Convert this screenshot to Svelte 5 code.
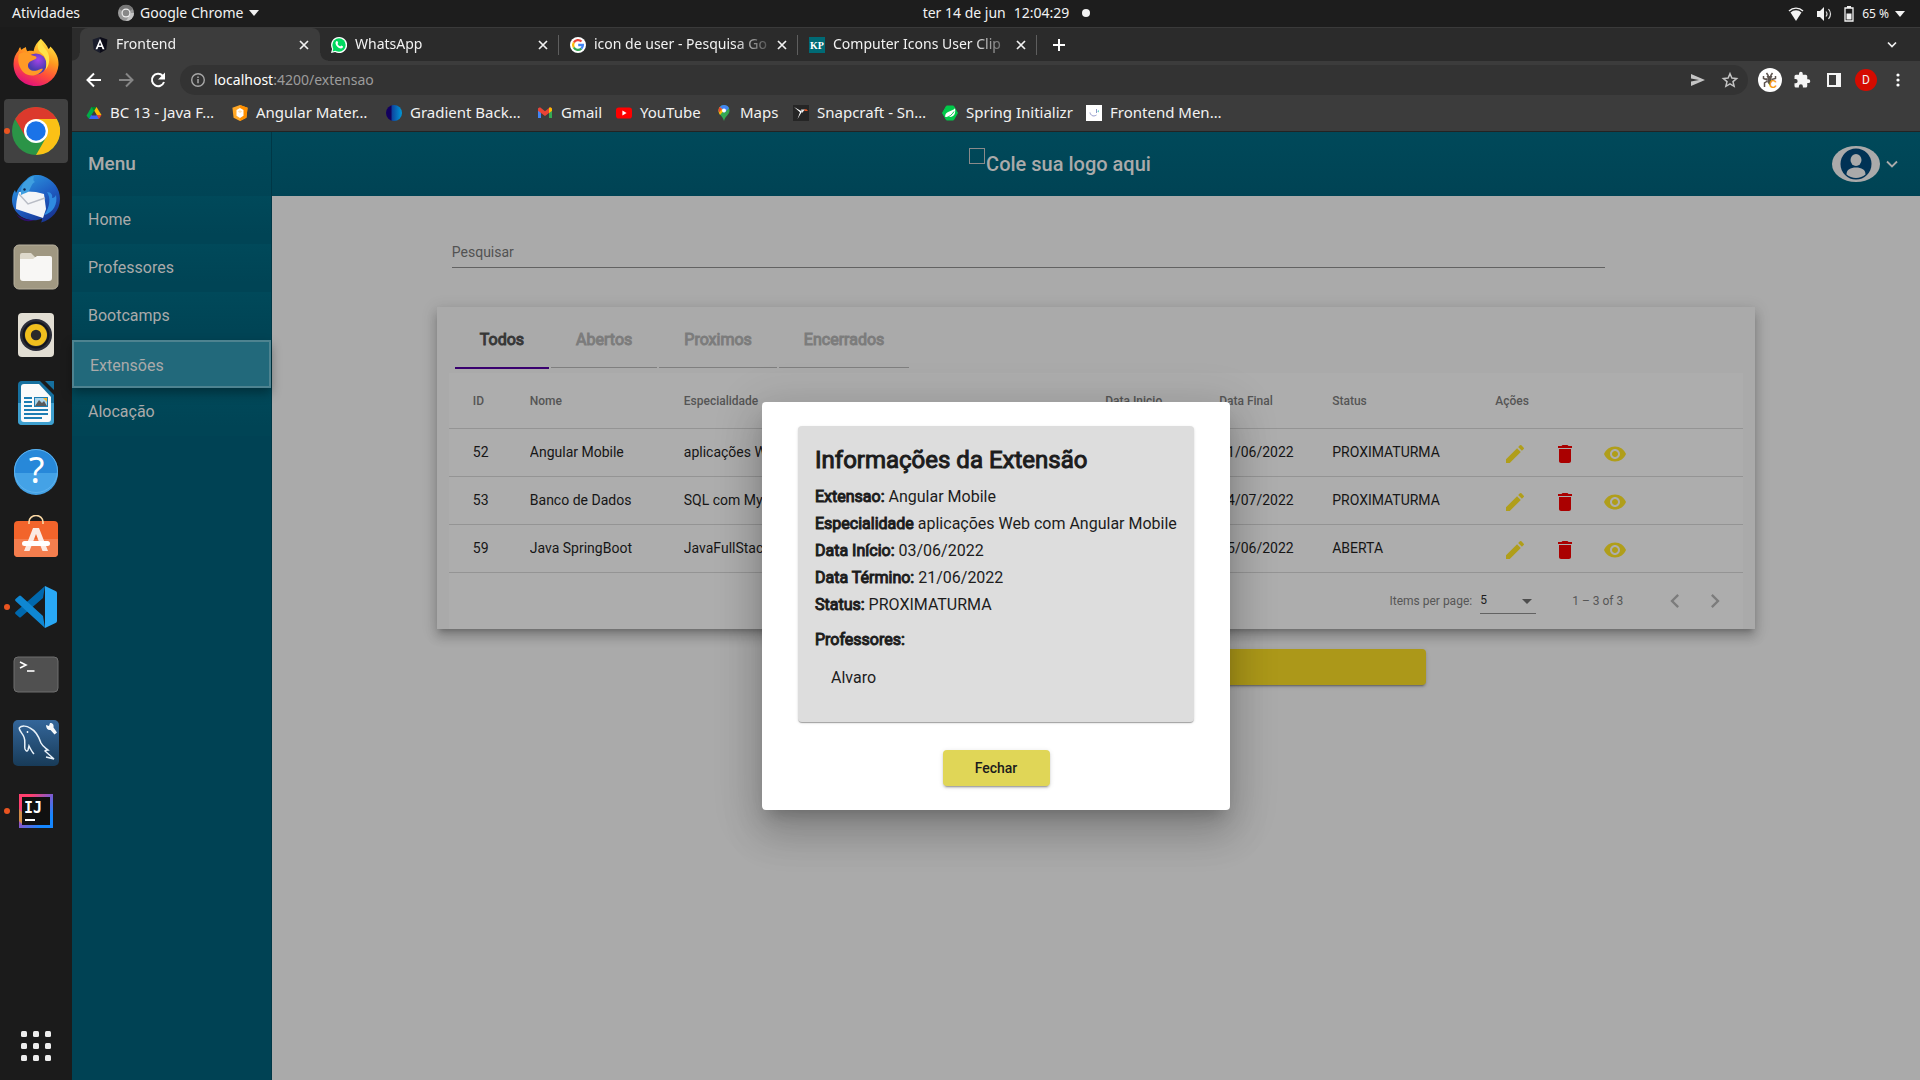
<script>
  const tabs = [
    { title: 'Frontend', icon: 'angular', active: true },
    { title: 'WhatsApp', icon: 'whatsapp' },
    { title: 'icon de user - Pesquisa Go', icon: 'google' },
    { title: 'Computer Icons User Clip', icon: 'kp' },
  ];
  const bookmarks = [
    { title: 'BC 13 - Java F…', icon: 'drive' },
    { title: 'Angular Mater…', icon: 'material' },
    { title: 'Gradient Back…', icon: 'gradient' },
    { title: 'Gmail', icon: 'gmail' },
    { title: 'YouTube', icon: 'youtube' },
    { title: 'Maps', icon: 'maps' },
    { title: 'Snapcraft - Sn…', icon: 'snap' },
    { title: 'Spring Initializr', icon: 'spring' },
    { title: 'Frontend Men…', icon: 'mentor' },
  ];
  const dock = [
    { name: 'Firefox', icon: 'firefox' },
    { name: 'Google Chrome', icon: 'chrome', running: true, focused: true },
    { name: 'Thunderbird', icon: 'thunderbird' },
    { name: 'Arquivos', icon: 'files' },
    { name: 'Rhythmbox', icon: 'rhythmbox' },
    { name: 'LibreOffice Writer', icon: 'writer' },
    { name: 'Ajuda', icon: 'help' },
    { name: 'Ubuntu Software', icon: 'software' },
    { name: 'Visual Studio Code', icon: 'vscode', running: true },
    { name: 'Terminal', icon: 'terminal' },
    { name: 'MySQL Workbench', icon: 'workbench' },
    { name: 'IntelliJ IDEA', icon: 'idea', running: true },
  ];
  const menu = ['Home', 'Professores', 'Bootcamps', 'Extensões', 'Alocação'];
  const filters = ['Todos', 'Abertos', 'Proximos', 'Encerrados'];
  const rows = [
    { id: 52, nome: 'Angular Mobile', esp: 'aplicações Web com Angular Mobile', ini: '03/06/2022', fim: '21/06/2022', status: 'PROXIMATURMA' },
    { id: 53, nome: 'Banco de Dados', esp: 'SQL com MySQL', ini: '14/06/2022', fim: '14/07/2022', status: 'PROXIMATURMA' },
    { id: 59, nome: 'Java SpringBoot', esp: 'JavaFullStack', ini: '01/06/2022', fim: '15/06/2022', status: 'ABERTA' },
  ];
  const details = [
    ['Extensao:', 'Angular Mobile'],
    ['Especialidade', 'aplicações Web com Angular Mobile'],
    ['Data Início:', '03/06/2022'],
    ['Data Término:', '21/06/2022'],
    ['Status:', 'PROXIMATURMA'],
  ];
  let activeMenu = $state('Extensões');
  let activeFilter = $state('Todos');
  let open = $state(true);
</script>

{#snippet favicon(name)}
  <svg class="fav" viewBox="0 0 16 16" aria-hidden="true">
    {#if name === 'angular'}
      <path d="M8 0l7.400 2.600-1.100 9.900L8 16z" fill="#0c0c18" /><path d="M8 0L.6 2.600l1.100 9.900L8 16z" fill="#1a1d2c" />
      <path d="M8 1.800L3.500 12.200h1.900l.9-2.200h3.400l.9 2.200h1.900zM8 5.400l1.200 3.100H6.800z" fill="#fff" fill-rule="evenodd" />
    {:else if name === 'whatsapp'}
      <path d="M8 0a8 8 0 0 0-6.900 12L0 16l4.100-1.100A8 8 0 1 0 8 0z" fill="#fff" />
      <circle cx="8" cy="8" r="6.700" fill="#00d95f" /><path d="M1.600 14.400l1-3.600 2.600 2.700z" fill="#00d95f" />
      <path d="M5.600 4.100c.5-.3.8 0 1 .5l.5 1.200c.1.400-.5.900-.6 1.100.6 1.200 1.500 2 2.700 2.500.3 0 .8-1 1.100-.9l1.500.8c.4.300.1 1.300-.4 1.700-1 .8-2.500.5-4.200-.6C5.700 9.300 4.600 7.700 4.500 6.300c0-.9.400-1.800 1.100-2.200z" fill="#fff" />
    {:else if name === 'google'}
      <circle cx="8" cy="8" r="8" fill="#fff" />
      <g fill="none" stroke-width="2.300">
        <path d="M11.500 4.500A4.900 4.900 0 0 0 3.800 5.500" stroke="#ea4335" />
        <path d="M3.800 5.500a4.900 4.900 0 0 0 0 5" stroke="#fbbc05" />
        <path d="M3.800 10.500a4.900 4.900 0 0 0 7.500 1.100" stroke="#34a853" />
        <path d="M11.300 11.600A4.900 4.900 0 0 0 12.900 8H8.200" stroke="#4285f4" />
      </g>
    {:else if name === 'kp'}
      <rect width="16" height="16" fill="#006a75" /><text x="8" y="11.500" text-anchor="middle" font-family="Liberation Serif, serif" font-weight="700" font-size="10" fill="#fff">KP</text>
    {:else if name === 'drive'}
      <path d="M5.500 2H8l1.300 2.300L3 14 .5 10.500z" fill="#00ac47" /><path d="M6 2h4.500L15.500 10h-4.700z" fill="#ffba00" /><path d="M5.500 2h5L8 6.200z" fill="#00832d" /><path d="M5.200 10h6L13 14H3z" fill="#3b63f5" /><path d="M10.800 10h4.700L13 14z" fill="#ea4335" /><path d="M8 6.200l2.600 4.300H5.400z" fill="#3c3c3c" />
    {:else if name === 'material'}
      <path d="M8 0l7.600 2.700-1.200 10L8 16l-6.400-3.300-1.200-10z" fill="#ffa726" /><path d="M8 0l7.600 2.700-1.200 10L8 16z" fill="#ff8f00" /><path d="M8 3l3.500 2v5.800L8 13l-3.500-2.200V5z" fill="#fff" /><path d="M8 5.200l2.300 1.400L8 8 5.700 6.600z" fill="#ffe0b2" />
    {:else if name === 'gradient'}
      <defs><linearGradient id="gb"><stop offset=".3" stop-color="#12005e" /><stop offset=".4" stop-color="#0d47a1" /><stop offset="1" stop-color="#0098d8" /></linearGradient></defs>
      <circle cx="8" cy="8" r="8" fill="url(#gb)" />
    {:else if name === 'gmail'}
      <path d="M1 3.500h3V13H1z" fill="#4285f4" /><path d="M12 3.500h3V13h-3z" fill="#34a853" /><path d="M1 4.500C1 2.600 3 2.200 4 3l4 3.200L12 3c1-.8 3-.4 3 1.500v1.200L8 11 1 5.700z" fill="#ea4335" /><path d="M12 3c1-.8 3-.4 3 1.500v1.200L12 8z" fill="#fbbc04" />
    {:else if name === 'youtube'}
      <rect y="2.500" width="16" height="11" rx="2.800" fill="#f00" /><path d="M6.400 5.600v4.800L10.600 8z" fill="#fff" />
    {:else if name === 'maps'}
      <path d="M8 0a5.500 5.500 0 0 0-5.500 5.500C2.500 9.500 6.800 11 8 16c1.200-5 5.500-6.500 5.500-10.500A5.500 5.500 0 0 0 8 0z" fill="#34a853" /><path d="M8 0a5.500 5.500 0 0 1 5 3.300L8 8 3.600 2.200A5.500 5.500 0 0 1 8 0z" fill="#4285f4" /><path d="M3.700 2L8 5.400 4 9.900C2.300 7.600 2 4.500 3.700 2z" fill="#fbbc04" /><path d="M3.700 2L6 4 3 7.500C2.200 5.500 2.500 3.500 3.700 2z" fill="#ea4335" /><circle cx="8" cy="5.500" r="2" fill="#fff" />
    {:else if name === 'snap'}
      <rect width="16" height="16" fill="#252525" /><path d="M1 2l8 4.500L4.500 14 7 7.200z" fill="#fff" /><path d="M8 4.500h4L9 8z" fill="#e8e8e8" /><path d="M11.500 4.200h2L15 6h-3.500z" fill="#e95420" />
    {:else if name === 'spring'}
      <path d="M4.500 1h7L15.500 8l-4 7h-7L.5 8z" fill="#00c94a" stroke="#00c94a" stroke-linejoin="round" /><path d="M13 3.200c.6 3 .6 8.800-5.500 8.800H3.200C2.600 5.500 10 7 13 3.200z" fill="#fff" /><path d="M3.500 12.800C7 12 10 10 12 6.500" stroke="#00c94a" fill="none" />
    {:else}
      <rect width="16" height="16" fill="#fff" /><path d="M4 7.500c.5 3 3.500 4.500 6.500 2.500M10.500 4v4" stroke="#8f96c8" fill="none" /><path d="M12.800 5l-1.500 1.300 1.500 1.300z" fill="#54c6c0" />
    {/if}
  </svg>
{/snippet}

{#snippet app(name)}
  <svg width="48" height="48" viewBox="0 0 48 48" aria-hidden="true">
    {#if name === 'firefox'}
      <defs>
        <linearGradient id="fx" x1=".8" y1="0" x2=".35" y2="1"><stop offset="0" stop-color="#fff24a" /><stop offset=".4" stop-color="#ff9a1f" /><stop offset=".7" stop-color="#ff4a3c" /><stop offset="1" stop-color="#e0107c" /></linearGradient>
        <radialGradient id="fxp" cx=".6" cy=".3"><stop offset="0" stop-color="#a443e8" /><stop offset="1" stop-color="#4b3bb0" /></radialGradient>
      </defs>
      <path d="M29 0c3 3 6 6 7.500 10 1-.8 1.500-1.500 1.800-2.600C44 13 47 19 46.500 26A22.600 22.600 0 0 1 24 47C11 47 1.500 37.500 1.500 25c0-6 2-10 5-13.500.2-1.300.7-2.700 1.800-3.500.3 1.500.7 2.300 1.200 2.800C10.800 9.800 12 8.800 14 8c0 2 .6 3.200 1.500 4.200 2.500-.6 4.500-.5 6 0C22.500 7 25 3 29 0z" fill="url(#fx)" />
      <circle cx="24" cy="25" r="10.500" fill="url(#fxp)" />
      <path d="M7 15c5-3 10-2 12 1l5 1.500c1 .8.600 2-1 2.800-3 1.300-6 2-7 5.500-.5 4 3 6 6 6 4.500 0 6-2.500 9-2-3 7-13 9-19 4C7 29 5 22 7 15z" fill="#ff9a26" />
      <path d="M29 0c0 7 5 9 7 14 2.500 6 1 13-2.500 17 2-7 .5-14-5.500-18C25 10 25 4 29 0z" fill="#ffe14a" />
    {:else if name === 'chrome'}
      <circle cx="24" cy="24" r="24" fill="#2b9447" />
      <path d="M24 12h20.800A24 24 0 0 1 24 48l10.400-18z" fill="#fbc116" />
      <path d="M3.200 12A24 24 0 0 1 44.800 12H24L13.600 30z" fill="#dc392c" />
      <circle cx="24" cy="24" r="12" fill="#fff" /><circle cx="24" cy="24" r="9.700" fill="#1a73e8" />
    {:else if name === 'thunderbird'}
      <defs><linearGradient id="tb" x1=".2" y1="0" x2=".8" y2="1"><stop offset="0" stop-color="#2d9be0" /><stop offset=".5" stop-color="#1f5fc4" /><stop offset="1" stop-color="#17308c" /></linearGradient></defs>
      <path d="M14 5C18-.5 25-1 31 1 42 5 48 14 48 24c0 11-8 21-19 23.500 1-2 1-3 1-4-6 3-15 2-21-2C3 37 0 31 0 25c0-4 1-7 3-10l1 3c2-5 6-10 10-13z" fill="url(#tb)" />
      <path d="M4 39c6 5 12 6 18 6-7 3-14 0-18-6z" fill="#30106b" />
      <path d="M7 17c7-1 17-1 25 2l2 15-3 9L4 34c0-6 1-12 3-17z" fill="#f4f5f7" /><path d="M7 19l9 10 17-6" fill="none" stroke="#b9bdc6" stroke-width="1.500" />
      <path d="M9 20C8 9 14 4 22 1c-1 3-1 5 1 6-4 2-4 6-6 9-2 2-4 2-8 4z" fill="#3f9fe0" />
      <path d="M35 17c4 6 3 15-3 23 9-2 14-11 12-20-1 2-2 3-4 3 1-3-1-6-5-6z" fill="#2f8be0" /><circle cx="12.500" cy="14.500" r="1.200" fill="#10254d" />
    {:else if name === 'files'}
      <rect x="2" y="2" width="44" height="44" rx="5" fill="#a09882" stroke="#b8b19e" /><path d="M8 12q0-2 2-2h9l4 4h15q2 0 2 2v4H8z" fill="#ded9cc" /><path d="M8 16h13l4-3h13q2 0 2 2v20q0 3-3 3H11q-3 0-3-3z" fill="#f8f7f5" />
    {:else if name === 'rhythmbox'}
      <rect x="6" y="2" width="36" height="44" rx="4" fill="#e2ded3" /><circle cx="24" cy="24" r="16" fill="#2b2d38" /><circle cx="24" cy="24" r="12.500" fill="none" stroke="#14161c" stroke-width="2" /><circle cx="24" cy="24" r="11" fill="#f0bf1e" /><circle cx="24" cy="24" r="5.200" fill="#2a2a2a" />
    {:else if name === 'writer'}
      <path d="M10 2h18l14 14v26q0 4-4 4H10q-4 0-4-4V6q0-4 4-4z" fill="#16709f" /><path d="M6 24h36v18q0 4-4 4H10q-4 0-4-4z" fill="#3fa0cf" /><path d="M33 2h9v9z" fill="#16709f" /><path d="M12 5h15l12 13v22q0 3-3 3H12q-3 0-3-3V8q0-3 3-3z" fill="#fafafa" />
      <path d="M12 19h8M12 23h8M12 27h8M12 31h24M12 35h24M12 39h18" stroke="#1d7db3" stroke-width="2" /><rect x="22" y="18" width="14" height="10" fill="#1d7db3" /><rect x="23" y="19" width="12" height="8" fill="#a9d3ea" /><path d="M23 27l4-6 3 3 2-2 3 5z" fill="#5a5a5a" /><path d="M31 19h4v4z" fill="#f4b52e" />
    {:else if name === 'help'}
      <circle cx="24" cy="24" r="22" fill="#2788d9" /><path d="M2 26a22 22 0 0 0 44 0z" fill="#44a2e6" /><circle cx="24" cy="24" r="21.500" fill="none" stroke="#5db2ee" /><text x="24.500" y="36" text-anchor="middle" font-family="Noto Sans, sans-serif" font-size="36" fill="#fff">?</text>
    {:else if name === 'software'}
      <g transform="translate(0 -3)">
        <rect x="2" y="9" width="44" height="36" rx="4" fill="#f2642b" /><path d="M2 27h44v14q0 4-4 4H6q-4 0-4-4z" fill="#f47e4e" /><path d="M17 12V10a7 6.500 0 0 1 14 0v2" fill="none" stroke="#fbd9a5" stroke-width="1.600" />
        <path d="M21 16h6l9 23h-5.500L24 22l-6.500 17H12z" fill="#fbeae3" /><rect x="10" y="29" width="28" height="5" rx="2.500" fill="#fff" />
      </g>
    {:else if name === 'vscode'}
      <path d="M33 3l-2 12L9 34q-1 1-2 0l-3.500-3q-1-1 0-2z" fill="#0068ad" /><path d="M33 45l-2-12L9 13q-1-1-2 0l-3.500 3q-1 1 0 2z" fill="#0f87d2" /><path d="M33 3l10.500 5q1.500.7 1.500 2v28q0 1.300-1.500 2L33 45z" fill="#29a8f5" />
    {:else if name === 'terminal'}
      <rect x="2" y="6" width="44" height="35" rx="4" fill="#505050" stroke="#6e6e6e" /><path d="M8 11l6 3-6 3" fill="none" stroke="#fff" stroke-width="1.600" /><path d="M15 20h7.500" stroke="#fff" stroke-width="1.600" />
    {:else if name === 'workbench'}
      <defs><linearGradient id="wb" x2="0" y2="1"><stop offset="0" stop-color="#34669a" /><stop offset="1" stop-color="#183b58" /></linearGradient></defs>
      <rect x="1" y="1" width="46" height="46" rx="5" fill="url(#wb)" /><path d="M7 9c3-3 8-2 11 0 6 3 9 9 11 15 2 4 5 5 7 7-2 0-3 0-3 1l9 8-8-2M7 9c1 4 4 6 5 9 2 5 0 8 1 12 1 2 2 3 3 1l1-4c2 4 3 6 5 8" fill="none" stroke="#e9f2f9" stroke-width="1.500" /><circle cx="15.500" cy="13" r=".9" fill="#fff" /><path d="M34 6l3 1 1-3c3 0 4 2 3.500 4.500l3.500 5-2.500 2-4-4.500c-2.500.5-4.500-1.500-4.500-5z" fill="#f4f8fb" />
    {:else}
      <defs><linearGradient id="ij" x1="0" y1="0" x2="1" y2="1"><stop offset=".2" stop-color="#ff3f6e" /><stop offset=".5" stop-color="#7b5bd0" /><stop offset=".8" stop-color="#1587ff" /></linearGradient></defs>
      <path d="M7 7h34v34H7z" fill="url(#ij)" /><path d="M7 22l4 4v12l-4-4z" fill="#d18b48" /><path d="M10 10h28v28H10z" fill="#101010" /><text x="12" y="26" font-family="DejaVu Sans Mono, monospace" font-weight="700" font-size="15" fill="#fff">IJ</text><path d="M13 33h10" stroke="#fff" stroke-width="2" />
    {/if}
  </svg>
{/snippet}

<div class="desktop">
  <header class="topbar">
    <div class="top-left">
      <button class="plain">Atividades</button>
      <button class="plain app-menu">
        <svg width="16" height="20" viewBox="0 0 16 20" aria-hidden="true"><circle cx="8" cy="10" r="8" fill="#9a9a9a" /><path d="M8 10L1 6a8 8 0 0 1 14 0z" fill="#777" /><path d="M8 18l5-8h3a8 8 0 0 1-8 8z" fill="#c4c4c4" /><circle cx="8" cy="10" r="4.500" fill="#eee" /><circle cx="8" cy="10" r="3.300" fill="#888" /></svg>
        Google Chrome
        <svg width="10" height="6" viewBox="0 0 10 6" aria-hidden="true"><path d="M0 0h10L5 6z" fill="#f2f2f2" /></svg>
      </button>
    </div>
    <div class="clock"><span>ter 14 de jun</span><span>12:04:29</span><i></i></div>
    <div class="tray">
      <svg width="16" height="16" viewBox="0 0 16 16" aria-hidden="true"><path d="M1 5a10 10 0 0 1 14 0" fill="none" stroke="#f2f2f2" stroke-width="1.400" /><path d="M2.500 6.500a8 8 0 0 1 11 0L8 15z" fill="#f2f2f2" /></svg>
      <svg width="16" height="16" viewBox="0 0 16 16" aria-hidden="true"><path d="M1 5h3l4-4v14l-4-4H1z" fill="#f2f2f2" /><path d="M10 5.500q2 2.500 0 5M12.500 3q4 5 0 10" fill="none" stroke="#ddd" stroke-width="1.200" /></svg>
      <svg width="10" height="16" viewBox="0 0 10 16" aria-hidden="true"><path d="M3 .5h4M1 2h8v13H1z" fill="none" stroke="#f2f2f2" stroke-width="1.300" /><path d="M2.500 7.500h5v6h-5z" fill="#f2f2f2" /></svg>
      <span>65 %</span>
      <svg width="10" height="6" viewBox="0 0 10 6" aria-hidden="true"><path d="M0 0h10L5 6z" fill="#f2f2f2" /></svg>
    </div>
  </header>

  <nav class="dock" aria-label="Dock">
    {#each dock as item}
      <button class="dock-item" class:focused={item.focused} aria-label={item.name}>
        {#if item.running}<i class="running"></i>{/if}
        {@render app(item.icon)}
      </button>
    {/each}
    <button class="dock-item grid-btn" aria-label="Mostrar aplicativos">
      <svg width="30" height="30" viewBox="0 0 30 30" aria-hidden="true">
        {#each [0, 12, 24] as y}{#each [0, 12, 24] as x}<rect {x} {y} width="6" height="6" rx="1.500" fill="#eee" />{/each}{/each}
      </svg>
    </button>
  </nav>

  <div class="browser">
    <div class="tabstrip">
      {#each tabs as tab}
        <div class="tab" class:active={tab.active}>
          {@render favicon(tab.icon)}
          <span class="tab-title">{tab.title}</span>
          <button class="plain close" aria-label="Fechar guia">
            <svg width="10" height="10" viewBox="0 0 10 10" aria-hidden="true"><path d="M1 1l8 8M9 1L1 9" stroke="#f1f1f1" stroke-width="1.700" /></svg>
          </button>
        </div>
      {/each}
      <button class="plain new-tab" aria-label="Nova guia"><svg width="12" height="12" viewBox="0 0 12 12" aria-hidden="true"><path d="M6 0v12M0 6h12" stroke="#fff" stroke-width="2" /></svg></button>
      <button class="plain tab-search" aria-label="Pesquisar guias"><svg width="10" height="8" viewBox="0 0 10 8" aria-hidden="true"><path d="M1 1.500l4 4 4-4" fill="none" stroke="#f1f1f1" stroke-width="1.700" /></svg></button>
    </div>
    <div class="toolbar">
      <button class="plain tool" aria-label="Voltar"><svg width="24" height="24" viewBox="0 0 24 24"><path d="M19 12H6M12 5.500L5.500 12l6.500 6.500" fill="none" stroke="#fff" stroke-width="2" /></svg></button>
      <button class="plain tool" aria-label="Avançar"><svg width="24" height="24" viewBox="0 0 24 24"><path d="M5 12h13M12 5.500l6.500 6.500-6.500 6.500" fill="none" stroke="#868686" stroke-width="2" /></svg></button>
      <button class="plain tool" aria-label="Recarregar"><svg width="24" height="24" viewBox="0 0 24 24"><path d="M18 14a6.200 6.200 0 1 1-1.400-6.400L18.500 9.500" fill="none" stroke="#fff" stroke-width="2" /><path d="M19 4.500v7h-7z" fill="#fff" /></svg></button>
      <div class="omnibox">
        <svg width="16" height="16" viewBox="0 0 16 16" aria-hidden="true"><circle cx="8" cy="8" r="6.300" fill="none" stroke="#a8a8a8" stroke-width="1.400" /><path d="M8 7v4.300M8 4.500v1.600" stroke="#a8a8a8" stroke-width="1.500" /></svg>
        <a class="url" href="#extensao">localhost<span>:4200/extensao</span></a>
        <button class="plain tool" aria-label="Compartilhar"><svg width="16" height="16" viewBox="0 0 16 16"><path d="M1 2l14 6-14 6V9.500L9 8 1 6.500z" fill="#c4c4c4" /></svg></button>
        <button class="plain tool" aria-label="Favoritar"><svg width="24" height="24" viewBox="0 0 24 24"><path d="M12 5.700l1.900 4.400 4.700.4-3.600 3.100 1.100 4.700-4.100-2.500-4.100 2.500L9 13.600l-3.600-3.100 4.700-.4z" fill="none" stroke="#c4c4c4" stroke-width="1.500" /></svg></button>
      </div>
      <div class="extensions">
        <button class="plain tool" aria-label="Extensão de cookies"><svg width="24" height="24" viewBox="0 0 24 24"><circle cx="12" cy="12" r="12" fill="#fff" /><path d="M8.500 5l2 3M14.500 5l-2 3M5.500 8v2.500l4 1.500M17.500 8v2.500l-4 1M9.500 13l-3 2v4M9.500 11H6" stroke="#5c534e" stroke-width="1.500" fill="none" /><path d="M8.500 8h6l-1 2v4.500l-2 2.500-2-2.500V10z" fill="#5c534e" /><text x="11" y="20" font-family="Liberation Sans, sans-serif" font-size="11" font-weight="700" fill="#f99b12">C</text></svg></button>
        <button class="plain tool" aria-label="Extensões do navegador"><svg width="18" height="18" viewBox="0 0 24 24"><path d="M20.500 11H19V7a2 2 0 0 0-2-2h-4V3.500a2.500 2.500 0 0 0-5 0V5H4a2 2 0 0 0-2 2v3.800h1.500a2.700 2.700 0 0 1 0 5.400H2V20a2 2 0 0 0 2 2h3.800v-1.500a2.700 2.700 0 0 1 5.400 0V22H17a2 2 0 0 0 2-2v-4h1.500a2.500 2.500 0 0 0 0-5z" fill="#f4f4f4" /></svg></button>
        <button class="plain tool" aria-label="Painel lateral"><svg width="14" height="14" viewBox="0 0 14 14"><path d="M0 0h14v14H0zM2 2v10h7V2z" fill="#f4f4f4" fill-rule="evenodd" /></svg></button>
        <button class="plain tool" aria-label="Perfil"><span class="profile">D</span></button>
        <button class="plain tool" aria-label="Mais opções"><svg width="4" height="14" viewBox="0 0 4 14"><circle cx="2" cy="2" r="1.600" fill="#fff" /><circle cx="2" cy="7" r="1.600" fill="#fff" /><circle cx="2" cy="12" r="1.600" fill="#fff" /></svg></button>
      </div>
    </div>
    <div class="bookmarks">
      {#each bookmarks as b}
        <a href="#favorito">{@render favicon(b.icon)}<span>{b.title}</span></a>
      {/each}
    </div>

    <div class="page">
      <aside class="sidebar">
        <h2>Menu</h2>
        <nav aria-label="Menu">
          {#each menu as item}
            <a href="#menu" class:selected={item === activeMenu} onclick={() => (activeMenu = item)}>{item}</a>
          {/each}
        </nav>
      </aside>
      <div class="content">
        <header class="appbar">
          <div class="logo"><i></i><span>Cole sua logo aqui</span></div>
          <button class="plain user" aria-label="Conta">
            <svg width="48" height="36" viewBox="0 0 48 36" aria-hidden="true"><ellipse cx="24" cy="18" rx="24" ry="18" fill="#aaa" /><circle cx="24" cy="18" r="15.500" fill="#003255" /><ellipse cx="24" cy="14" rx="5.500" ry="6" fill="#aaa" /><path d="M14.500 28.500c0-5 4-7 9.500-7s9.500 2 9.500 7c-5 4.500-14 4.500-19 0z" fill="#aaa" /></svg>
            <svg width="12" height="8" viewBox="0 0 12 8" aria-hidden="true"><path d="M1 1.500l5 5 5-5" fill="none" stroke="#aaa" stroke-width="1.800" /></svg>
          </button>
        </header>
        <main>
          <div class="search"><input type="text" placeholder="Pesquisar" aria-label="Pesquisar" /></div>
          <section class="card">
            <div class="filters" role="tablist">
              {#each filters as f}
                <button class="filter" role="tab" aria-selected={f === activeFilter} class:on={f === activeFilter} onclick={() => (activeFilter = f)}>{f}</button>
              {/each}
            </div>
            <div class="list">
              <table>
                <colgroup><col class="c-id" /><col class="c-nome" /><col /><col class="c-inicio" /><col class="c-final" /><col class="c-status" /><col class="c-acoes" /></colgroup>
                <thead><tr><th>ID</th><th>Nome</th><th>Especialidade</th><th>Data Inicio</th><th>Data Final</th><th>Status</th><th>Ações</th></tr></thead>
                <tbody>
                  {#each rows as r}
                    <tr>
                      <td>{r.id}</td><td>{r.nome}</td><td>{r.esp}</td><td>{r.ini}</td><td>{r.fim}</td><td>{r.status}</td>
                      <td>
                        <div class="actions">
                          <button class="plain" aria-label="Editar"><svg width="24" height="24" viewBox="0 0 24 24"><path d="M3 17.250V21h3.750L17.810 9.940l-3.750-3.750L3 17.250zM20.710 7.040a1 1 0 0 0 0-1.410l-2.340-2.340a1 1 0 0 0-1.410 0l-1.830 1.830 3.750 3.750 1.830-1.830z" fill="#b09e1a" /></svg></button>
                          <button class="plain" aria-label="Excluir"><svg width="24" height="24" viewBox="0 0 24 24"><path d="M6 19c0 1.100.9 2 2 2h8c1.100 0 2-.9 2-2V7H6v12zM19 4h-3.500l-1-1h-5l-1 1H5v2h14V4z" fill="#aa0000" /></svg></button>
                          <button class="plain" aria-label="Visualizar"><svg width="24" height="24" viewBox="0 0 24 24"><path d="M12 4.500C7 4.500 2.730 7.610 1 12c1.730 4.390 6 7.500 11 7.500s9.270-3.110 11-7.500c-1.730-4.390-6-7.500-11-7.500zM12 17c-2.760 0-5-2.240-5-5s2.240-5 5-5 5 2.240 5 5-2.240 5-5 5zm0-8c-1.660 0-3 1.340-3 3s1.340 3 3 3 3-1.340 3-3-1.340-3-3-3z" fill="#b09e1a" /></svg></button>
                        </div>
                      </td>
                    </tr>
                  {/each}
                </tbody>
              </table>
              <div class="paginator">
                <label for="page-size">Items per page:</label>
                <div class="select">
                  <select id="page-size"><option>5</option><option>10</option><option>25</option></select>
                  <svg width="10" height="5" viewBox="0 0 10 5" aria-hidden="true"><path d="M0 0h10L5 5z" fill="#4d4d4d" /></svg>
                </div>
                <span class="range">1 – 3 of 3</span>
                <button class="plain page-btn" aria-label="Página anterior"><svg width="28" height="28" viewBox="0 0 24 24"><path d="M15.410 7.410L14 6l-6 6 6 6 1.410-1.410L10.830 12z" fill="#7c7c7c" /></svg></button>
                <button class="plain page-btn" aria-label="Próxima página"><svg width="28" height="28" viewBox="0 0 24 24"><path d="M10 6L8.590 7.410 13.170 12l-4.580 4.590L10 18l6-6z" fill="#7c7c7c" /></svg></button>
              </div>
            </div>
          </section>
          <button class="plain add" aria-label="Adicionar extensão"></button>
        </main>
      </div>

      {#if open}
        <div class="overlay">
          <div class="dialog" role="dialog" aria-labelledby="dialog-title">
            <div class="info">
              <h1 id="dialog-title">Informações da Extensão</h1>
              {#each details as [k, v]}<p><b>{k}</b> {v}</p>{/each}
              <p class="teachers"><b>Professores:</b></p>
              <ul><li>Alvaro</li></ul>
            </div>
            <button class="plain ok" onclick={() => (open = false)}>Fechar</button>
          </div>
        </div>
      {/if}
    </div>
  </div>
</div>

<style>
  :global(body) { margin: 0; background: #1b1b1b; }
  .desktop, .desktop * { box-sizing: border-box; }
  .desktop {
    min-height: 100vh;
    display: grid;
    grid-template: 27px 1fr / 72px minmax(0, 1fr);
    font-family: 'Noto Sans', sans-serif;
    font-size: 15px;
    color: #f2f2f2;
  }
  svg { display: block; flex: none; }
  a { color: inherit; text-decoration: none; }
  .plain { border: 0; padding: 0; margin: 0; background: none; font: inherit; color: inherit; cursor: pointer; }

  .topbar {
    grid-column: 1 / -1;
    display: grid;
    grid-template-columns: 1fr auto 1fr;
    align-items: center;
    padding: 0 15px 0 12px;
    background: #1d1d1d;
    font-size: 14px;
    line-height: 20px;
  }
  .top-left, .clock { padding-bottom: 2px; }
  .top-left { display: flex; gap: 38px; }
  .app-menu { display: flex; align-items: center; gap: 6px; }
  .clock { display: flex; align-items: center; gap: 8px; padding-left: 96px; }
  .clock i { width: 8px; height: 8px; margin-left: 5px; border-radius: 50%; background: #f2f2f2; }
  .tray { display: flex; align-items: center; justify-content: flex-end; gap: 12px; font-size: 12px; }
  .tray span { margin-left: -4px; }
  .tray span + svg { margin-left: -6px; }

  .dock { display: flex; flex-direction: column; gap: 4px; padding: 4px 4px 2px; background: #1b1b1b; }
  .dock-item { position: relative; display: grid; place-items: center; height: 64px; padding: 0; border: 0; border-radius: 4px; background: none; }
  .focused { background: #414141; }
  .running { position: absolute; left: 0; top: 29px; width: 6px; height: 6px; border-radius: 50%; background: #e95420; }
  .grid-btn { margin-top: auto; }

  .browser { display: flex; flex-direction: column; border-top: 1px solid #3a3a3a; background: #3c3c3c; }
  .tabstrip { display: flex; height: 33px; padding-left: 8px; background: #2b2b2b; }
  .tab { display: flex; align-items: center; gap: 8px; width: 239px; padding: 0 11px; position: relative; }
  .tab:not(.active)::after { content: ''; position: absolute; right: 0; top: 7px; width: 1px; height: 20px; background: #5e5e5e; }
  .tab.active { width: 240px; padding: 0 11px 0 12px; border-radius: 8px 8px 0 0; background: #3c3c3c; }
  .tab.active::before, .tab.active::after { content: ''; position: absolute; bottom: 0; width: 8px; height: 8px; }
  .tab.active::before { right: 100%; background: radial-gradient(circle at 0 0, transparent 7px, #3c3c3c 8px); }
  .tab.active::after { left: 100%; background: radial-gradient(circle at 100% 0, transparent 7px, #3c3c3c 8px); }
  .tab-title { flex: 1; overflow: hidden; padding-bottom: 2px; white-space: nowrap; font-size: 14px; line-height: 24px; mask-image: linear-gradient(to right, #000 140px, transparent 182px); }
  .fav { width: 16px; height: 16px; }
  .new-tab { margin-left: 16px; }
  .tab-search { margin: 0 23px 0 auto; }

  .toolbar { display: flex; align-items: center; height: 38px; padding: 0 6px; }
  .tool { display: grid; place-items: center; width: 32px; height: 30px; }
  .omnibox { flex: 1; display: flex; align-items: center; height: 30px; margin-left: 6px; padding: 0 2px 0 10px; border-radius: 15px; background: #333; }
  .url { flex: 1; margin-left: 8px; padding-bottom: 2px; font-size: 14px; color: #fff; }
  .url span { color: #9c9c9c; }
  .extensions { display: flex; margin-left: 6px; }
  .profile { display: grid; place-items: center; width: 22px; height: 22px; border-radius: 50%; background: #d50b00; font: 12px Roboto, sans-serif; }
  .bookmarks { display: grid; grid-template-columns: 146px 154px 151px 79px 100px 77px 149px 144px auto; height: 33px; padding: 0 0 5px 14px; border-bottom: 1px solid #232323; }
  .bookmarks a { display: flex; align-items: center; gap: 8px; white-space: nowrap; }
  .bookmarks span { padding-bottom: 2px; }

  .page {
    position: relative;
    flex: 1;
    display: grid;
    grid-template-columns: 200px minmax(0, 1fr);
    background: #aaa;
    font-family: Roboto, sans-serif;
    font-size: 14px;
    color: #1c1c1c;
  }
  .sidebar { background: #004254; border-right: 1px solid #003746; color: #aaa; }
  .sidebar h2 { margin: 0; height: 64px; padding-left: 16px; font-size: 19px; font-weight: 500; line-height: 64px; background: linear-gradient(#00495a, #004455); }
  .sidebar nav { display: flex; flex-direction: column; }
  .sidebar a { height: 48px; padding-left: 16px; font-size: 16px; line-height: 48px; background: linear-gradient(#00495a, #004455 80%); }
  .sidebar a.selected { position: relative; border: 2px solid #4e8390; background: #22697b; box-shadow: 0 5px 10px rgba(0, 0, 0, .35); }
  .appbar { display: flex; align-items: center; height: 64px; padding: 0 22px 0 16px; background: linear-gradient(#00495a, #004354); color: #aaa; }
  .logo { flex: 1; display: flex; justify-content: center; font-size: 20px; font-weight: 500; line-height: 32px; }
  .logo i { width: 16px; height: 16px; margin-right: 1px; border: 1px solid #8a8a8a; }
  .user { display: flex; align-items: center; gap: 6px; }

  main { display: flex; flex-direction: column; align-items: center; }
  .search { width: 80%; padding: 46px 0 0 15px; }
  .search input { display: block; width: calc((100% + 15px) * 7 / 8); height: 26px; padding: 0 0 6px; border: 0; border-bottom: 1px solid #626262; border-radius: 0; background: none; font: 14px/20px Roboto, sans-serif; color: #1c1c1c; outline: 0; }
  .search input::placeholder { color: #525252; opacity: 1; }
  .card { width: 80%; margin-top: 39px; padding: 0 12px; background: #aaa; box-shadow: 0 5px 5px -3px rgba(0, 0, 0, .2), 0 8px 10px 1px rgba(0, 0, 0, .14), 0 3px 14px 2px rgba(0, 0, 0, .12); }
  .filters { display: flex; gap: 2px; height: 62px; margin: 0 0 4px 6px; }
  .filter { padding: 4px 25px 0; border: 0; border-bottom: 1px solid #7f7f7f; height: 61px; background: none; font: 16px Roboto, sans-serif; -webkit-text-stroke: 1px currentColor; color: #7c7c7c; }
  .filter.on { height: 62px; border-bottom: 2px solid #39006f; color: #373737; }
  .list { background: #adadad; }
  table { width: 100%; border-collapse: collapse; table-layout: fixed; }
  .c-id { width: 81px; } .c-nome { width: 154px; } .c-inicio { width: 114px; } .c-final { width: 113px; } .c-status { width: 163px; } .c-acoes { width: 248px; }
  th, td { padding: 0; border-bottom: 1px solid #949494; text-align: left; white-space: nowrap; }
  td { overflow: hidden; text-overflow: ellipsis; }
  th:first-child, td:first-child { padding-left: 24px; }
  th { height: 55px; padding-top: 2px; font-size: 12px; font-weight: 500; color: #555; }
  td { height: 48px; font-size: 14px; color: #161616; }
  .actions { display: flex; gap: 26px; padding: 4px 0 0 8px; }
  .paginator { display: flex; align-items: center; justify-content: flex-end; height: 56px; padding: 1px 8px 0 0; font-size: 12px; color: #565656; }
  .select { position: relative; width: 56px; height: 26px; margin: 0 36px 0 8px; border-bottom: 1px solid #626262; }
  .select select { appearance: none; width: 100%; height: 26px; padding: 0 0 2px; border: 0; background: none; font: 12px Roboto, sans-serif; color: #1c1c1c; }
  .select svg { position: absolute; right: 4px; top: 11px; pointer-events: none; }
  .range { margin-right: 32px; }
  .page-btn { display: grid; place-items: center; width: 40px; height: 40px; }
  .add { width: 40%; height: 36px; margin-top: 20px; border-radius: 4px; background: #ac9819; box-shadow: 0 3px 1px -2px rgba(0, 0, 0, .2), 0 2px 2px rgba(0, 0, 0, .14), 0 1px 5px rgba(0, 0, 0, .12); }

  .overlay { position: absolute; inset: 0; display: grid; place-items: center; }
  .dialog { display: flex; flex-direction: column; align-items: center; padding: 24px 36px; border-radius: 4px; background: #fff; box-shadow: 0 11px 15px -7px rgba(0, 0, 0, .2), 0 24px 38px 3px rgba(0, 0, 0, .14), 0 9px 46px 8px rgba(0, 0, 0, .12); }
  .info { min-width: 396px; padding: 17px 15px 15px 17px; border-radius: 4px; background: #ddd; box-shadow: 0 2px 1px -1px rgba(0, 0, 0, .2), 0 1px 1px rgba(0, 0, 0, .14), 0 1px 3px rgba(0, 0, 0, .12); font-size: 16px; line-height: 27px; }
  .info h1 { margin: 0 0 6px; font-size: 24px; font-weight: 400; line-height: 34px; -webkit-text-stroke: 1px currentColor; }
  .info p { margin: 0; }
  .info b { font-weight: 400; -webkit-text-stroke: 1px currentColor; }
  .info .teachers { margin-top: 8px; }
  .info ul { margin: 11px 0 16px; padding: 0 0 0 16px; list-style: none; }
  .ok { width: 107px; height: 36px; margin-top: 28px; border-radius: 4px; background: #e0d657; font-size: 14px; font-weight: 500; box-shadow: 0 3px 1px -2px rgba(0, 0, 0, .2), 0 2px 2px rgba(0, 0, 0, .14), 0 1px 5px rgba(0, 0, 0, .12); }
</style>
